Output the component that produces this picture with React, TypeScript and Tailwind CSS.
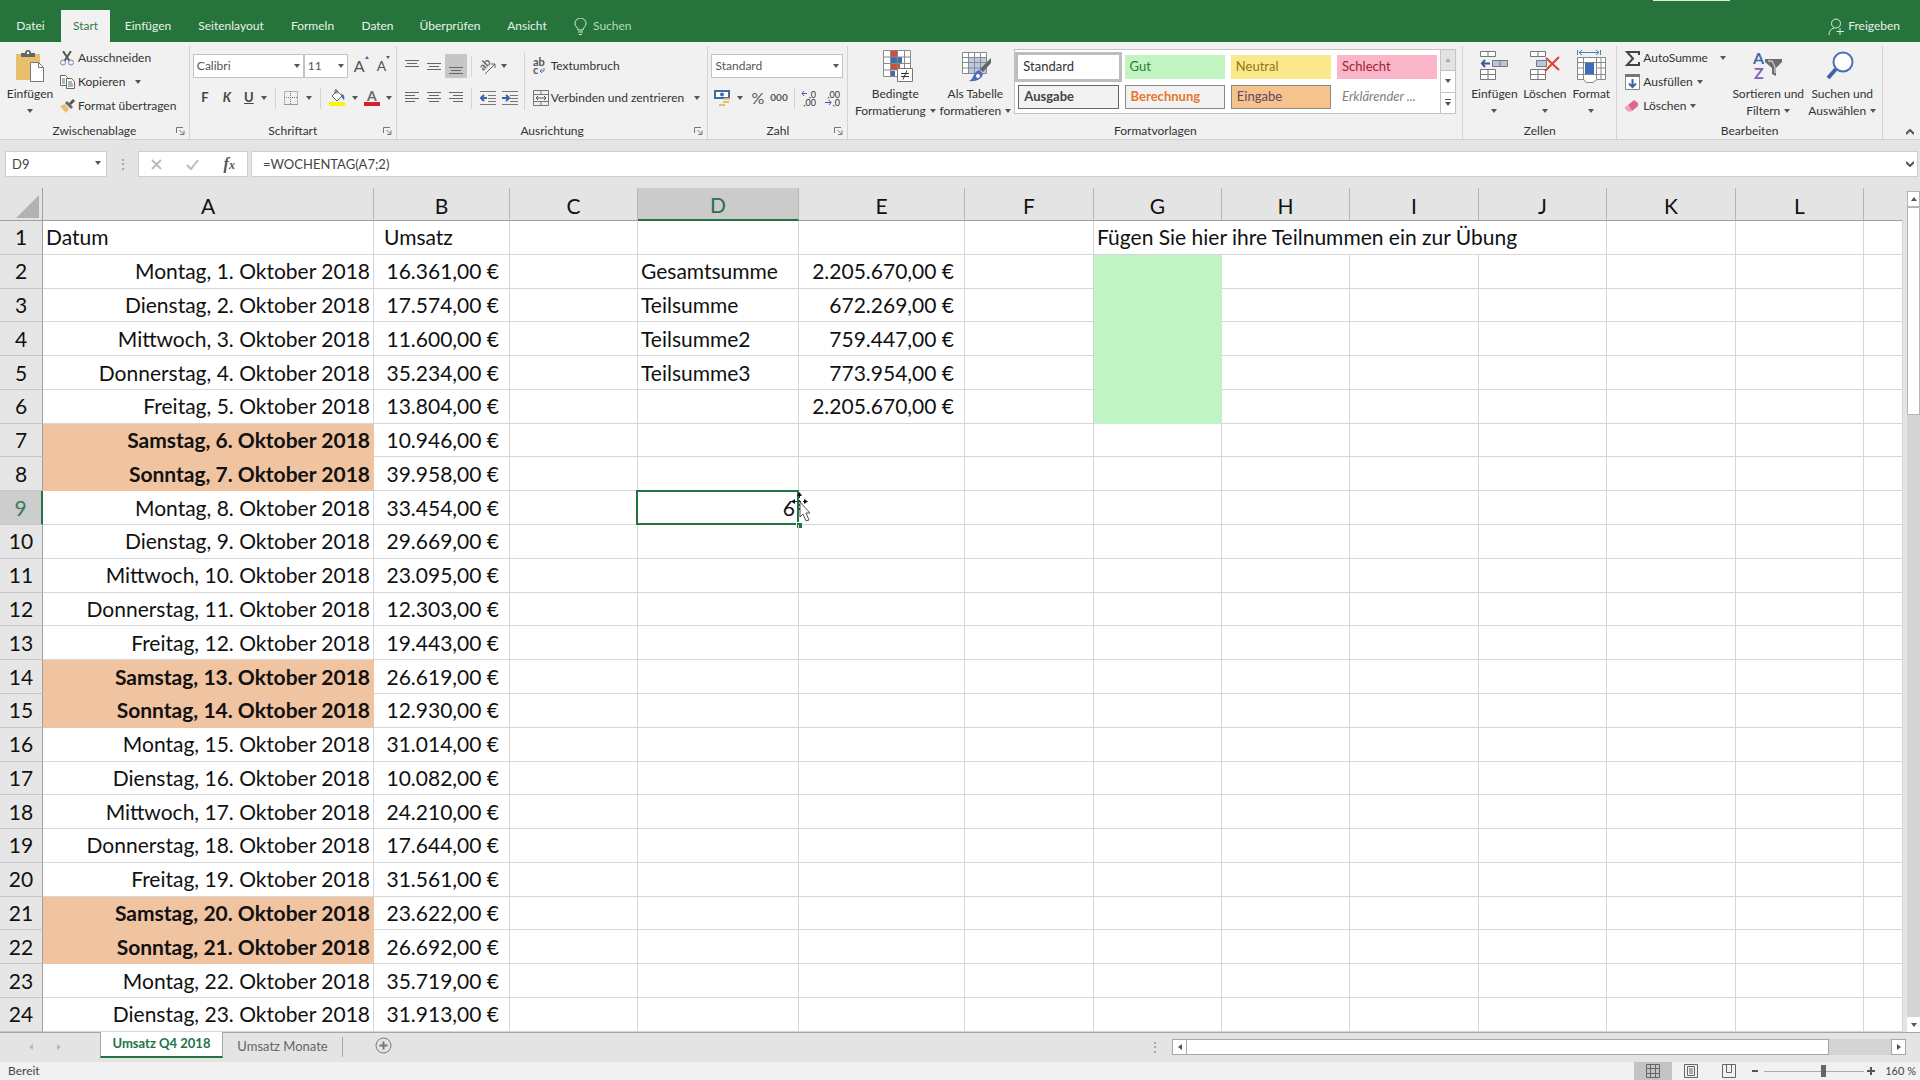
import React from 'react';
import clsx from 'clsx';

type TDay = [date: string, revenue: string];

const DAYS: TDay[] = [
  ['Montag, 1. Oktober 2018', '16.361,00 €'],
  ['Dienstag, 2. Oktober 2018', '17.574,00 €'],
  ['Mittwoch, 3. Oktober 2018', '11.600,00 €'],
  ['Donnerstag, 4. Oktober 2018', '35.234,00 €'],
  ['Freitag, 5. Oktober 2018', '13.804,00 €'],
  ['Samstag, 6. Oktober 2018', '10.946,00 €'],
  ['Sonntag, 7. Oktober 2018', '39.958,00 €'],
  ['Montag, 8. Oktober 2018', '33.454,00 €'],
  ['Dienstag, 9. Oktober 2018', '29.669,00 €'],
  ['Mittwoch, 10. Oktober 2018', '23.095,00 €'],
  ['Donnerstag, 11. Oktober 2018', '12.303,00 €'],
  ['Freitag, 12. Oktober 2018', '19.443,00 €'],
  ['Samstag, 13. Oktober 2018', '26.619,00 €'],
  ['Sonntag, 14. Oktober 2018', '12.930,00 €'],
  ['Montag, 15. Oktober 2018', '31.014,00 €'],
  ['Dienstag, 16. Oktober 2018', '10.082,00 €'],
  ['Mittwoch, 17. Oktober 2018', '24.210,00 €'],
  ['Donnerstag, 18. Oktober 2018', '17.644,00 €'],
  ['Freitag, 19. Oktober 2018', '31.561,00 €'],
  ['Samstag, 20. Oktober 2018', '23.622,00 €'],
  ['Sonntag, 21. Oktober 2018', '26.692,00 €'],
  ['Montag, 22. Oktober 2018', '35.719,00 €'],
  ['Dienstag, 23. Oktober 2018', '31.913,00 €'],
];

// row number -> [column D, column E]
const SUMS: Record<number, [string, string]> = {
  2: ['Gesamtsumme', '2.205.670,00 €'],
  3: ['Teilsumme', '672.269,00 €'],
  4: ['Teilsumme2', '759.447,00 €'],
  5: ['Teilsumme3', '773.954,00 €'],
  6: ['', '2.205.670,00 €'],
  9: ['6', ''],
};

const COLUMNS = [
  { name: 'A', width: 'w-[331px]' },
  { name: 'B', width: 'w-[136px]' },
  { name: 'C', width: 'w-[128px]' },
  { name: 'D', width: 'w-[161px]' },
  { name: 'E', width: 'w-[166px]' },
  { name: 'F', width: 'w-[129px]' },
  { name: 'G', width: 'w-[128px]' },
  { name: 'H', width: 'w-[128px]' },
  { name: 'I', width: 'w-[129px]' },
  { name: 'J', width: 'w-[128px]' },
  { name: 'K', width: 'w-[129px]' },
  { name: 'L', width: 'w-[128px]' },
];

const TABS = [
  { label: 'Datei', width: 'w-[61px]' },
  { label: 'Start', width: 'w-[49px]' },
  { label: 'Einfügen', width: 'w-[76px]' },
  { label: 'Seitenlayout', width: 'w-[90px]' },
  { label: 'Formeln', width: 'w-[73px]' },
  { label: 'Daten', width: 'w-[57px]' },
  { label: 'Überprüfen', width: 'w-[88px]' },
  { label: 'Ansicht', width: 'w-[66px]' },
];

function Arrow({ className }: { className?: string }) {
  return (
    <svg
      viewBox="0 0 6 4"
      className={clsx('h-1 w-1.5 shrink-0', className)}
      fill="#555"
    >
      <path d="M0 0h6L3 4z" />
    </svg>
  );
}

function Launcher() {
  return (
    <button className="absolute right-1 bottom-1" aria-label="Weitere Optionen">
      <svg width="9" height="8" viewBox="0 0 9 8" fill="none" stroke="#777">
        <path d="M.5 6V.5H7M3.5 3l4 4M8 3.5v4H4" />
      </svg>
    </button>
  );
}

function Group({
  label,
  className,
  launcher,
  children,
}: {
  label: string;
  className: string;
  launcher?: boolean;
  children: React.ReactNode;
}) {
  return (
    <section
      className={clsx(
        'relative flex h-[93px] flex-col border-r border-[#d4d4d4]',
        className,
      )}
    >
      <div className="flex h-[77px]">{children}</div>
      <h2 className="text-center leading-4">{label}</h2>
      {launcher && <Launcher />}
    </section>
  );
}

function BigButton({
  icon,
  lines,
  className,
}: {
  icon: React.ReactNode;
  lines: string[];
  className: string;
}) {
  return (
    <button
      className={clsx(
        'flex shrink-0 flex-col items-center pt-1 leading-[17px] whitespace-nowrap',
        className,
      )}
    >
      <span className="mb-[3px] flex h-8 items-center">{icon}</span>
      <span>{lines[0]}</span>
      <span className="flex h-[17px] items-center gap-1">
        {lines[1]}
        <Arrow />
      </span>
    </button>
  );
}

function SmallButton({
  icon,
  label,
  arrow,
}: {
  icon: React.ReactNode;
  label: string;
  arrow?: string;
}) {
  return (
    <button className="flex h-6 items-center whitespace-nowrap">
      <span className="flex w-[18px] shrink-0">{icon}</span>
      {label}
      {arrow && <Arrow className={arrow} />}
    </button>
  );
}

function Combo({
  label,
  value,
  className,
}: {
  label: string;
  value: string;
  className: string;
}) {
  return (
    <div className={clsx('relative h-6', className)}>
      <select
        aria-label={label}
        className="h-full w-full appearance-none border border-[#c3c3c3] bg-white px-[3px] text-[#555]"
      >
        <option>{value}</option>
      </select>
      <Arrow className="absolute top-2.5 right-1" />
    </div>
  );
}

function Divider({ className }: { className?: string }) {
  return <span className={clsx('w-px bg-[#d4d4d4]', className ?? 'h-[21px]')} />;
}

function Lines({ d, y = 0 }: { d: number[][]; y?: number }) {
  return (
    <svg width="14" height="13" viewBox="0 0 14 13" stroke="#666">
      {d.map(([x1, x2], i) => (
        <path key={i} d={`M${x1} ${y + i * 3 + 0.5}H${x2}`} />
      ))}
    </svg>
  );
}

function PasteIcon() {
  return (
    <svg width="30" height="32" viewBox="0 0 30 32">
      <path d="M1 4h24v26H1z" fill="#e8bf6d" />
      <path d="M6 7V3h4a3 3 0 0 1 6 0h4v4z" fill="#666" />
      <circle cx="13" cy="3" r="1.2" fill="#fff" />
      <path d="M15.5 12.5h8l5 5v14h-13z" fill="#fff" stroke="#777" />
      <path d="M23.5 12.5v5h5" fill="none" stroke="#777" />
    </svg>
  );
}

function CutIcon() {
  return (
    <svg width="14" height="15" viewBox="0 0 14 15" fill="none">
      <path d="M3 0l6.5 10M11 0L4.5 10" stroke="#555" strokeWidth="2" />
      <circle cx="3" cy="11.5" r="2.5" stroke="#7186b8" />
      <circle cx="11" cy="11.5" r="2.5" stroke="#7186b8" />
    </svg>
  );
}

function CopyIcon() {
  return (
    <svg width="15" height="14" viewBox="0 0 15 14" fill="#fff" stroke="#666">
      <path d="M.5.5h5l2 2v8h-7z" />
      <path d="M2 4h3M2 6h3M2 8h3" />
      <path d="M6.5 3.5h5l3 3v7h-8z" />
      <path d="M8 7h4M8 9h5M8 11h5" />
    </svg>
  );
}

function BrushIcon() {
  return (
    <svg width="15" height="14" viewBox="0 0 15 14">
      <path d="M0 7l5-2 4 5-3 4z" fill="#e8bf6d" />
      <path d="M5 4l2-2 6 6-2 2z" fill="#666" />
      <path d="M9 4l4-4 2 2-4 4z" fill="#555" />
    </svg>
  );
}

function FillIcon() {
  return (
    <svg width="17" height="18" viewBox="0 0 17 18" fill="none">
      <path d="M0 13h16v4H0z" fill="#fbf50a" />
      <path d="M3 7l5-5 5 5-5 5z" fill="#fff" stroke="#666" />
      <path d="M6 5V1h2v4" stroke="#666" />
      <path d="M12 5c3 0 4 3 3 6-2-1-2-3-3-6z" fill="#3f6fb0" />
    </svg>
  );
}

function BordersIcon() {
  return (
    <svg width="14" height="14" viewBox="0 0 14 14" fill="none" stroke="#777">
      <path d="M.5.5h13v13H.5zM6.5 0v14M0 6.5h14" strokeDasharray="1 1" />
      <path d="M0 13.5h14" stroke="#999" />
    </svg>
  );
}

function IndentIcon({ right }: { right?: boolean }) {
  return (
    <svg width="16" height="14" viewBox="0 0 16 14" fill="none" stroke="#777">
      <path d="M0 .5h16M8 4.5h8M8 7.5h8M8 10.5h8M0 13.5h16" />
      {right ? (
        <path d="M0 7h6M4 4l3 3-3 3" stroke="#3a62ad" strokeWidth="2" />
      ) : (
        <path d="M7 7H1M4 4L1 7l3 3" stroke="#3a62ad" strokeWidth="2" />
      )}
    </svg>
  );
}

function OrientationIcon() {
  return (
    <svg width="17" height="17" viewBox="0 0 17 17" fill="none">
      <text
        x="1"
        y="10"
        fontSize="11"
        fontWeight="700"
        fill="#666"
        transform="rotate(-45 6 9)"
      >
        ab
      </text>
      <path d="M5 16L15 6M11 6h4v4" stroke="#666" />
    </svg>
  );
}

function WrapIcon() {
  return (
    <svg width="14" height="18" viewBox="0 0 14 18" fill="none">
      <text x="0" y="9" fontSize="11" fontWeight="700" fill="#555">
        ab
      </text>
      <text x="0" y="17" fontSize="11" fontWeight="700" fill="#555">
        c
      </text>
      <path d="M11 11v3H7M9 12l-2 2 2 2" stroke="#5a6fae" />
    </svg>
  );
}

function MergeIcon() {
  return (
    <svg width="16" height="16" viewBox="0 0 16 16" fill="none" stroke="#777">
      <path d="M.5.5h15v15H.5zM.5 4.5h15M.5 11.5h15M8 .5v4M8 11.5v4" />
      <path d="M3 8h10M5 6L3 8l2 2M11 6l2 2-2 2" stroke="#555" />
    </svg>
  );
}

function CurrencyIcon() {
  return (
    <svg width="17" height="17" viewBox="0 0 17 17" fill="none">
      <path d="M1 1h14v7H1z" fill="#fff" stroke="#3a6ea5" strokeWidth="2" />
      <circle cx="8" cy="4.5" r="2" fill="#3a6ea5" />
      <path d="M10 8h6v2h-6zM9 11h6v2H9zM5 14h6v2H5z" fill="#e8bf6d" />
    </svg>
  );
}

function DecimalIcon({ less }: { less?: boolean }) {
  return (
    <svg width="16" height="17" viewBox="0 0 16 17" fill="none">
      <text x="15" y="8" fontSize="9" textAnchor="end" fill="#333">
        {less ? ',00' : ',0'}
      </text>
      <text x="15" y="16" fontSize="9" textAnchor="end" fill="#333">
        {less ? ',0' : ',00'}
      </text>
      {less ? (
        <path d="M0 12.5h6M4 10l2 2.5L4 15" stroke="#4a5fa5" />
      ) : (
        <path d="M6 3.5H1M3 1L1 3.500 3 6" stroke="#4a5fa5" />
      )}
    </svg>
  );
}

function ConditionalIcon() {
  return (
    <svg className="ml-1.5" width="30" height="32" viewBox="0 0 30 32" fill="none">
      <path d="M.5.5h27v26H.5z" fill="#fff" />
      <path d="M8 1h6v6H8zM8 14h9v6H8z" fill="#d04f3a" />
      <path d="M8 7h11v6H8zM8 21h4v6H8z" fill="#3b6fb5" />
      <path
        d="M.5.5h27v26H.5zM7.5.5v26M14.5.5v26M21.5.5v26M.5 7h27M.5 13.5h27M.5 20h27"
        stroke="#8a8a8a"
      />
      <path d="M14.5 18.5h15v13h-15z" fill="#fff" stroke="#777" />
      <path d="M18 23.5h8M18 26.5h8M24 20.5l-4 9" stroke="#333" />
    </svg>
  );
}

function FormatTableIcon() {
  return (
    <svg className="ml-1" width="30" height="32" viewBox="0 0 30 32" fill="none">
      <path d="M.5 2.5h24v21H.5z" fill="#fff" />
      <path d="M7 8h18v16H7z" fill="#bcc9e6" />
      <path
        d="M.5 2.5h24v21H.5zM6.5 2.5v21M12.5 2.5v21M18.5 2.5v21M.5 7.5h24M.5 12.5h24M.5 18h24"
        stroke="#8a8a8a"
      />
      <path d="M29 8v5l-8 9-3-3z" fill="#666" />
      <path d="M17 20l4 4c-1 5-7 8-14 7 5-2 4-9 10-11z" fill="#4a6fb8" />
      <circle cx="16" cy="26" r="2" fill="#fff" />
    </svg>
  );
}

function InsertCellsIcon() {
  return (
    <svg width="28" height="30" viewBox="0 0 28 30" fill="none" stroke="#777">
      <path d="M.5.5h15v5H.5zM8 .5v5" fill="#fff" />
      <path d="M12.5 9.5h15v6h-15z" fill="#b8c4e0" />
      <path d="M20 9.5v6" />
      <path d="M10 12.5H2M5 9l-3 3.5L5 16" stroke="#41598f" strokeWidth="2" />
      <path d="M.5 18.5h15v10H.5zM8 18.5v10M.5 23.5h15" fill="#fff" />
    </svg>
  );
}

function DeleteCellsIcon() {
  return (
    <svg width="30" height="30" viewBox="0 0 30 30" fill="none" stroke="#777">
      <path d="M.5.5h15v5H.5zM8 .5v5" fill="#fff" />
      <path d="M6.5 9.5h10v6h-10z" fill="#b8c4e0" />
      <path d="M.5 18.5h15v10H.5zM8 18.5v10M.5 23.5h15" fill="#fff" />
      <path d="M16 7l13 12M29 6L15 20" stroke="#d9432c" strokeWidth="2" />
    </svg>
  );
}

function FormatCellsIcon() {
  return (
    <svg width="29" height="33" viewBox="0 0 29 33" fill="none" stroke="#888">
      <path
        d="M2 2.5h20M5 0L2 2.5 5 5M19 0l3 2.5L19 5M.5 0v5M23.5 0v5"
        stroke="#3f86b8"
      />
      <path
        d="M.5 7.5h28v22H20l-4 3H9l-2-3H.5zM6.5 7.5v22M19.5 7.5v22M24 7.5v22M.5 12.5h28M.5 24.5h28M.5 18h28"
        fill="#fff"
      />
      <path d="M7 13h12v11H7z" fill="#fff" stroke="none" />
      <path d="M8 13h9v11H8z" fill="#3f6cb8" stroke="none" />
    </svg>
  );
}

function SigmaIcon() {
  return (
    <svg width="15" height="15" viewBox="0 0 15 15" fill="none">
      <path
        d="M14 4V1H2l6 6.5L2 14h12v-3"
        stroke="#444"
        strokeWidth="2"
      />
    </svg>
  );
}

function FillDownIcon() {
  return (
    <svg width="15" height="16" viewBox="0 0 15 16" fill="none">
      <path d="M.5.5h14v15H.5z" fill="#fff" stroke="#888" />
      <path d="M0 0h15v3H0z" fill="#777" />
      <path
        d="M7.5 5v8M4 9.5L7.5 13 11 9.5"
        stroke="#3f62a8"
        strokeWidth="2"
      />
    </svg>
  );
}

function EraserIcon() {
  return (
    <svg width="14" height="14" viewBox="0 0 14 14">
      <path d="M3 6l6-5 4 3v3l-6 5z" fill="#e2678f" />
      <path d="M3 6l4 6-3 1-4-3V8z" fill="#f0a3bd" />
    </svg>
  );
}

function SortIcon() {
  return (
    <svg width="30" height="30" viewBox="0 0 30 30">
      <text x="0" y="13" fontSize="16" fontWeight="700" fill="#4169ae">
        A
      </text>
      <text x="1" y="28" fontSize="16" fontWeight="700" fill="#8f5bc0">
        Z
      </text>
      <path d="M12 8h17v3l-6 6v8l-4-2v-6l-7-6z" fill="#6d6d6d" />
      <path d="M15 10h4l3 6v6" fill="none" stroke="#eee" />
    </svg>
  );
}

function FindIcon() {
  return (
    <svg className="mr-1" width="28" height="30" viewBox="0 0 28 30" fill="none">
      <path d="M10 18L2 27" stroke="#3f62a8" strokeWidth="4" />
      <circle cx="17" cy="11" r="9.5" fill="#fff" stroke="#4a72b4" strokeWidth="2" />
    </svg>
  );
}

const STYLES = [
  { label: 'Standard', style: 'bg-white text-[#333] outline-3 outline-[#bdbdbd]' },
  { label: 'Gut', style: 'bg-[#c0f4c0] text-[#2f7a35]' },
  { label: 'Neutral', style: 'bg-[#f9e98a] text-[#967518]' },
  { label: 'Schlecht', style: 'bg-[#fbb5c8] text-[#9c1f36]' },
  { label: 'Ausgabe', style: 'border border-[#666] bg-[#f2f2f2] font-bold text-[#444]' },
  { label: 'Berechnung', style: 'border border-[#8a8a8a] bg-[#f2f2f2] font-bold text-[#e8772a]' },
  { label: 'Eingabe', style: 'border border-[#8a8a8a] bg-[#f6c38d] text-[#5b4767]' },
  { label: 'Erklärender ...', style: 'bg-white text-[#808080] italic' },
];

function Ribbon() {
  return (
    <div className="flex h-[98px] shrink-0 border-b border-[#cfcfcf] bg-[#f1f1f1] pt-1 text-[#333]">
      <Group label="Zwischenablage" launcher className="w-[190px]">
        <BigButton icon={<PasteIcon />} lines={['Einfügen']} className="w-[60px]" />
        <div className="flex flex-col">
          <SmallButton icon={<CutIcon />} label="Ausschneiden" />
          <SmallButton icon={<CopyIcon />} label="Kopieren" arrow="ml-2.5" />
          <SmallButton icon={<BrushIcon />} label="Format übertragen" />
        </div>
      </Group>

      <Group label="Schriftart" launcher className="w-[207px]">
        <div className="flex flex-col gap-2 pt-2 pl-[3px]">
          <div className="flex items-center">
            <Combo label="Schriftart" value="Calibri" className="w-[111px]" />
            <Combo label="Schriftgrad" value="11" className="w-11" />
            <button className="ml-1.5 flex text-base leading-5 text-[#555]">
              A
              <span className="h-0 border-x-2 border-b-3 border-x-transparent border-b-[#4a5fa5]" />
            </button>
            <button className="ml-2 flex text-sm leading-5 text-[#555]">
              A
              <span className="h-0 border-x-2 border-t-3 border-x-transparent border-t-[#4a5fa5]" />
            </button>
          </div>
          <div className="flex h-6 items-center">
            <button className="w-6 text-[13px] font-bold text-[#444]">F</button>
            <button className="w-5 text-[13px] font-bold text-[#444] italic">K</button>
            <button className="w-6 text-[13px] font-bold text-[#444] underline">U</button>
            <Arrow className="mr-2" />
            <Divider />
            <button className="mx-2" aria-label="Rahmen">
              <BordersIcon />
            </button>
            <Arrow className="mr-2" />
            <Divider />
            <button className="mr-1.5 ml-2" aria-label="Füllfarbe">
              <FillIcon />
            </button>
            <Arrow className="mr-1.5" />
            <button className="flex h-[18px] w-4 flex-col items-center text-sm leading-[13px] font-bold text-[#666]">
              A<span className="h-1 w-4 bg-[#d3222a]" />
            </button>
            <Arrow className="ml-1.5" />
          </div>
        </div>
      </Group>

      <Group label="Ausrichtung" launcher className="w-[312px]">
        <div className="flex flex-col gap-2 pt-2 pl-1">
          <div className="flex h-6 items-center">
            <button className="flex h-6 w-[22px] items-center justify-center" aria-label="Oben ausrichten">
              <Lines d={[[0, 14], [2, 12], [0, 14]]} />
            </button>
            <button className="flex h-6 w-[22px] items-center justify-center" aria-label="Zentriert ausrichten">
              <Lines d={[[0, 14], [2, 12], [0, 14]]} y={3} />
            </button>
            <button className="flex h-6 w-[22px] items-end justify-center bg-[#c6c6c6] pb-1" aria-label="Unten ausrichten">
              <Lines d={[[0, 14], [2, 12], [0, 14]]} y={6} />
            </button>
            <Divider className="mx-1 h-[21px]" />
            <button className="mr-1 ml-1 flex items-center gap-1" aria-label="Ausrichtung">
              <OrientationIcon />
              <Arrow />
            </button>
          </div>
          <div className="flex h-6 items-center">
            <button className="flex w-[22px] justify-center" aria-label="Linksbündig">
              <Lines d={[[0, 14], [0, 10], [0, 14], [0, 10]]} />
            </button>
            <button className="flex w-[22px] justify-center" aria-label="Zentriert">
              <Lines d={[[0, 14], [2, 12], [0, 14], [2, 12]]} />
            </button>
            <button className="flex w-[22px] justify-center" aria-label="Rechtsbündig">
              <Lines d={[[0, 14], [4, 14], [0, 14], [4, 14]]} />
            </button>
            <Divider className="mx-1 h-[21px]" />
            <button className="ml-1" aria-label="Einzug verkleinern">
              <IndentIcon />
            </button>
            <button className="ml-1.5" aria-label="Einzug vergrößern">
              <IndentIcon right />
            </button>
          </div>
        </div>
        <Divider className="mt-1.5 mr-2 ml-1.5 h-[58px]" />
        <div className="flex flex-col gap-2 pt-2">
          <button className="flex h-6 items-center">
            <span className="w-[18px]">
              <WrapIcon />
            </span>
            Textumbruch
          </button>
          <button className="flex h-6 items-center whitespace-nowrap">
            <span className="w-[18px]">
              <MergeIcon />
            </span>
            Verbinden und zentrieren
            <Arrow className="ml-2.5" />
          </button>
        </div>
      </Group>

      <Group label="Zahl" launcher className="w-[140px]">
        <div className="flex flex-col gap-2 pt-2 pl-[3px]">
          <Combo label="Zahlenformat" value="Standard" className="w-[132px]" />
          <div className="flex h-6 items-center pl-[3px]">
            <button aria-label="Buchhaltungszahlenformat">
              <CurrencyIcon />
            </button>
            <Arrow className="ml-1.5" />
            <button className="ml-2 text-base text-[#555]">%</button>
            <button className="mr-1.5 ml-1.5 text-[10px] font-bold text-[#555]">000</button>
            <Divider />
            <button className="ml-1.5" aria-label="Dezimalstelle hinzufügen">
              <DecimalIcon />
            </button>
            <button className="ml-2" aria-label="Dezimalstelle entfernen">
              <DecimalIcon less />
            </button>
          </div>
        </div>
      </Group>

      <Group label="Formatvorlagen" className="min-w-[615px] flex-1">
        <BigButton icon={<ConditionalIcon />} lines={['Bedingte', 'Formatierung']} className="ml-1.5 w-[82px]" />
        <BigButton icon={<FormatTableIcon />} lines={['Als Tabelle', 'formatieren']} className="w-[78px]" />
        <div className="mt-[3px] mr-1.5 flex h-[65px] flex-1 border border-[#c3c3c3] bg-white">
          <div className="grid flex-1 grid-cols-4 gap-1.5 px-[3px] py-[5px]">
            {STYLES.map(({ label, style }) => (
              <button
                key={label}
                className={clsx('h-6 px-[5px] text-left text-[13px] whitespace-nowrap', style)}
              >
                {label}
              </button>
            ))}
          </div>
          <div className="flex w-[15px] flex-col border-l border-[#c3c3c3]">
            <button className="flex flex-1 items-center justify-center bg-[#e3e3e3]" aria-label="Nach oben">
              <Arrow className="rotate-180 opacity-40" />
            </button>
            <button className="flex flex-1 items-center justify-center border-y border-[#c3c3c3]" aria-label="Nach unten">
              <Arrow />
            </button>
            <button className="flex flex-1 flex-col items-center justify-center gap-0.5" aria-label="Weitere">
              <span className="h-px w-1.5 bg-[#555]" />
              <Arrow />
            </button>
          </div>
        </div>
      </Group>

      <Group label="Zellen" className="w-[154px]">
        <BigButton icon={<InsertCellsIcon />} lines={['Einfügen']} className="ml-1 w-[54px]" />
        <BigButton icon={<DeleteCellsIcon />} lines={['Löschen']} className="w-[47px]" />
        <BigButton icon={<FormatCellsIcon />} lines={['Format']} className="w-[46px]" />
      </Group>

      <Group label="Bearbeiten" className="w-[266px]">
        <div className="flex w-[112px] shrink-0 flex-col pl-2">
          <SmallButton icon={<SigmaIcon />} label="AutoSumme" arrow="ml-3" />
          <SmallButton icon={<FillDownIcon />} label="Ausfüllen" arrow="ml-1" />
          <SmallButton icon={<EraserIcon />} label="Löschen" arrow="ml-1" />
        </div>
        <BigButton icon={<SortIcon />} lines={['Sortieren und', 'Filtern']} className="w-[78px]" />
        <BigButton icon={<FindIcon />} lines={['Suchen und', 'Auswählen']} className="w-[70px]" />
      </Group>

      <button className="mb-1 flex w-[37px] items-end justify-end pr-1.5" aria-label="Menüband reduzieren">
        <svg width="8" height="6" viewBox="0 0 8 6" fill="none" stroke="#555" strokeWidth="2">
          <path d="M0 5l4-4 4 4" />
        </svg>
      </button>
    </div>
  );
}

function FormulaBar() {
  return (
    <div className="flex h-12 shrink-0 items-center bg-[#e4e4e4] pr-0.5 pl-[5px] text-sm">
      <div className="relative h-[26px] w-[102px]">
        <input
          aria-label="Namenfeld"
          defaultValue="D9"
          className="h-full w-full border border-[#cfcfcf] bg-white px-1.5 text-[13px] text-[#444]"
        />
        <Arrow className="absolute top-2.5 right-1.5" />
      </div>
      <span className="w-[31px] text-center text-[#999]">⋮</span>
      <div className="flex h-[26px] w-[110px] items-center justify-around border border-[#cfcfcf] bg-white">
        <button aria-label="Abbrechen">
          <svg width="11" height="11" viewBox="0 0 11 11" stroke="#bbb" strokeWidth="2">
            <path d="M1 1l9 9M10 1l-9 9" />
          </svg>
        </button>
        <button aria-label="Eingeben">
          <svg width="13" height="11" viewBox="0 0 13 11" fill="none" stroke="#bbb" strokeWidth="2">
            <path d="M1 6l4 4 7-9" />
          </svg>
        </button>
        <button className="font-['Liberation_Serif',serif] text-base leading-4 font-bold text-[#555] italic">
          f<span className="text-xs">x</span>
        </button>
      </div>
      <div className="relative ml-[3px] h-[26px] flex-1">
        <input
          aria-label="Bearbeitungsleiste"
          defaultValue="=WOCHENTAG(A7;2)"
          className="h-full w-full border border-[#cfcfcf] bg-white px-[11px] text-[13px] text-[#444]"
        />
        <svg
          className="absolute top-2.5 right-1"
          width="8"
          height="6"
          viewBox="0 0 8 6"
          fill="none"
          stroke="#555"
          strokeWidth="2"
        >
          <path d="M0 1l4 4 4-4" />
        </svg>
      </div>
    </div>
  );
}

function MoveCursor() {
  return (
    <svg
      className="absolute top-0 left-full z-10 -ml-2"
      width="20"
      height="31"
      viewBox="0 0 20 31"
    >
      <path d="M5 10.5h10M9.5 5v14" stroke="#222" strokeDasharray="2 2" />
      <path d="M1 10.5l4-2.500v5zM18 10.5L14 8v5zM9.5 1L7 5h5z" fill="#111" />
      <path
        d="M10 11v15l3-3 3 7 3-1-3-7h4z"
        fill="#fff"
        stroke="#555"
      />
    </svg>
  );
}

const CELL = 'border-r border-b border-[#d6d6d6] p-0 whitespace-nowrap';

function Row({ row }: { row: number }) {
  const [date, revenue] = row === 1 ? ['Datum', 'Umsatz'] : DAYS[row - 2];
  const isWeekend = date.startsWith('Samstag') || date.startsWith('Sonntag');
  const [label, sum] = SUMS[row] ?? ['', ''];
  const isActive = row === 9;

  return (
    <tr>
      <th
        scope="row"
        className={clsx(
          'border-b p-0 font-normal',
          isActive
            ? 'border-r-2 border-r-[#217346] border-b-[#c6c6c6] bg-[#cdcdcd] text-[#3d7a57]'
            : 'border-r border-r-[#9f9f9f] border-b-[#c6c6c6] bg-[#e6e6e6]',
        )}
      >
        {row}
      </th>
      <td
        className={clsx(
          'border-r border-b p-0 px-[3px] whitespace-nowrap',
          row > 1 && 'text-right',
          isWeekend ? 'border-[#f0c3a1] bg-[#f0c3a1] font-bold' : 'border-[#d6d6d6]',
        )}
      >
        {date}
      </td>
      <td className={clsx(CELL, row === 1 ? 'pl-2.5' : 'pr-2.5 text-right')}>{revenue}</td>
      <td className={CELL} />
      <td className={clsx(CELL, 'relative px-[3px]', isActive && 'text-right')}>
        {label}
        {isActive && (
          <>
            <span className="absolute -inset-px -left-0.5 border-2 border-[#217346]" />
            <span className="absolute -right-1 -bottom-1 size-1.5 border-t border-l border-white bg-[#217346]" />
            <MoveCursor />
          </>
        )}
      </td>
      <td className={clsx(CELL, 'pr-2.5 text-right')}>{sum}</td>
      <td className={CELL} />
      {row === 1 ? (
        <td colSpan={4} className={clsx(CELL, 'px-[3px]')}>
          Fügen Sie hier ihre Teilnummen ein zur Übung
        </td>
      ) : (
        <>
          <td
            className={clsx(
              'border-r border-b',
              row <= 6 ? 'border-[#c1f4c4] bg-[#c1f4c4]' : 'border-[#d6d6d6]',
            )}
          />
          <td className={CELL} />
          <td className={CELL} />
          <td className={CELL} />
        </>
      )}
      <td className={CELL} />
      <td className={CELL} />
      <td className={CELL} />
    </tr>
  );
}

function Sheet() {
  return (
    <div className="flex min-h-0 flex-1 bg-[#e4e4e4]">
      <table className="h-full flex-1 table-fixed border-separate border-spacing-0 bg-white text-[21px] leading-6 text-[#111]">
        <colgroup>
          <col className="w-[43px]" />
          {COLUMNS.map(({ name, width }) => (
            <col key={name} className={width} />
          ))}
          <col />
        </colgroup>
        <thead className="bg-[#e4e4e4]">
          <tr className="h-[33px]">
            <th className="border-r border-b border-[#9f9f9f] p-0" aria-label="Alles auswählen">
              <svg className="mt-1 ml-auto mr-[3px]" width="23" height="23" viewBox="0 0 23 23">
                <path d="M23 0v23H0z" fill="#b3b3b3" />
              </svg>
            </th>
            {COLUMNS.map(({ name }) => (
              <th
                key={name}
                scope="col"
                className={clsx(
                  'border-r border-r-[#b5b5b5] p-0 pt-[3px] font-normal',
                  name === 'D'
                    ? 'border-b-2 border-b-[#217346] bg-[#cbcbcb] text-[#2f6b4c]'
                    : 'border-b border-b-[#9f9f9f]',
                )}
              >
                {name}
              </th>
            ))}
            <th className="border-r border-b border-r-transparent border-b-[#9f9f9f] p-0" />
          </tr>
        </thead>
        <tbody>
          {Array.from({ length: 24 }, (_, i) => (
            <Row key={i} row={i + 1} />
          ))}
        </tbody>
      </table>
      <div className="ml-1 flex w-[13px] flex-col bg-[#d4d4d4]">
        <div className="h-[3px] bg-[#e4e4e4]" />
        <button className="flex h-4 items-center justify-center border border-[#b5b5b5] bg-white" aria-label="Nach oben">
          <Arrow className="rotate-180" />
        </button>
        <div className="h-[208px] border border-[#b5b5b5] bg-white" />
        <button className="mt-auto flex h-[15px] items-center justify-center bg-white" aria-label="Nach unten">
          <Arrow />
        </button>
      </div>
    </div>
  );
}

function SheetTabs() {
  return (
    <div className="flex h-[30px] shrink-0 border-t border-[#a6a6a6] bg-[#e4e4e4] text-[13px]">
      <div className="flex h-7 w-[100px] items-center gap-[22px] pl-7">
        <button aria-label="Vorheriges Blatt">
          <Arrow className="rotate-90 opacity-30" />
        </button>
        <button aria-label="Nächstes Blatt">
          <Arrow className="-rotate-90 opacity-30" />
        </button>
      </div>
      <button className="-mt-px h-[26px] w-[123px] border-x border-b-2 border-x-[#a6a6a6] border-b-[#217346] bg-white font-bold text-[#217346]">
        Umsatz Q4 2018
      </button>
      <button className="my-1 h-5 w-[120px] border-r border-[#a6a6a6] text-[#666]">
        Umsatz Monate
      </button>
      <button className="ml-8 self-start pt-1" aria-label="Neues Blatt">
        <svg width="17" height="17" viewBox="0 0 17 17" fill="none" stroke="#777">
          <circle cx="8.5" cy="8.5" r="7.5" />
          <path d="M8.5 4.5v8M4.5 8.5h8" strokeWidth="2" />
        </svg>
      </button>
      <span className="mr-2.5 ml-auto pt-1 text-sm text-[#999]">⋮</span>
      <div className="mt-1.5 mr-3.5 flex h-4 w-[734px] bg-[#d4d4d4]">
        <button className="flex w-[15px] items-center justify-center border border-[#a6a6a6] bg-white" aria-label="Nach links">
          <Arrow className="rotate-90" />
        </button>
        <div className="w-[642px] border border-l-0 border-[#a6a6a6] bg-white" />
        <button className="ml-auto flex w-[15px] items-center justify-center border border-[#a6a6a6] bg-white" aria-label="Nach rechts">
          <Arrow className="-rotate-90" />
        </button>
      </div>
    </div>
  );
}

function StatusBar() {
  return (
    <footer className="flex h-[18px] shrink-0 items-center bg-[#f1f1f1] pr-1 pl-2 text-[#444]">
      <span className="mr-auto">Bereit</span>
      <button className="flex h-full w-[38px] items-center justify-center bg-[#c3c3c3]" aria-label="Normal">
        <svg width="14" height="14" viewBox="0 0 14 14" fill="none" stroke="#666">
          <path d="M.5.5h13v13H.5zM4.5 0v14M9.5 0v14M0 4.5h14M0 9.5h14" />
        </svg>
      </button>
      <button className="w-[38px] pl-3" aria-label="Seitenlayout">
        <svg width="14" height="14" viewBox="0 0 14 14" fill="none" stroke="#666">
          <path d="M.5.5h13v13H.5zM3.5 2.5h7v9h-7zM5 5h4M5 7h4M5 9h4" />
        </svg>
      </button>
      <button className="w-[38px] pl-3" aria-label="Umbruchvorschau">
        <svg width="14" height="14" viewBox="0 0 14 14" fill="none" stroke="#666">
          <path d="M.5.5h13v13H.5zM4.5 0v8.500h5V0" />
        </svg>
      </button>
      <button className="flex h-full w-4 items-center pl-1" aria-label="Verkleinern">
        <span className="h-0.5 w-1.5 bg-[#555]" />
      </button>
      <input
        type="range"
        aria-label="Zoom"
        min={0}
        max={100}
        defaultValue={60}
        className="h-3 w-[100px] appearance-none bg-[linear-gradient(#aaa,#aaa)] bg-[length:100%_1px] bg-center bg-no-repeat [&::-webkit-slider-thumb]:h-3 [&::-webkit-slider-thumb]:w-[5px] [&::-webkit-slider-thumb]:appearance-none [&::-webkit-slider-thumb]:bg-[#666]"
      />
      <button className="ml-[3px]" aria-label="Vergrößern">
        <svg width="8" height="8" viewBox="0 0 8 8" stroke="#555" strokeWidth="2">
          <path d="M4 0v8M0 4h8" />
        </svg>
      </button>
      <span className="ml-2.5 text-[11px]">160 %</span>
    </footer>
  );
}

export default function App() {
  return (
    <div className="flex h-screen min-h-[900px] flex-col overflow-hidden bg-[#e4e4e4] font-['Lato','Noto_Sans',sans-serif] text-xs">
      <header className="relative flex h-[42px] shrink-0 items-end bg-[#27733c] text-[#e6f3e8]">
        <nav className="flex">
          {TABS.map(({ label, width }) => (
            <button
              key={label}
              className={clsx(
                'h-8 text-center',
                width,
                label === 'Start' && 'bg-[#f1f1f1] text-[#2f7a4a]',
              )}
            >
              {label}
            </button>
          ))}
        </nav>
        <button className="ml-3.5 flex h-8 items-center gap-1.5 text-[#b4dcb9]">
          <svg width="13" height="17" viewBox="0 0 13 17" fill="none" stroke="#d9efdc">
            <path d="M4 12c0-3-3-3-3-6.5a5.5 5.5 0 0 1 11 0C12 9 9 9 9 12zM4 14h5M5 16.5h3" />
          </svg>
          Suchen
        </button>
        <button className="mr-5 ml-auto flex h-8 items-center gap-1">
          <svg width="16" height="17" viewBox="0 0 16 17" fill="none" stroke="#d9efdc">
            <circle cx="8" cy="5.5" r="4.5" />
            <path d="M1 17c0-4 2-6 5-7M12 10v7M8.5 13.5H16" />
          </svg>
          Freigeben
        </button>
        <span className="absolute top-0 right-[190px] h-px w-[77px] bg-[#d9efdc]" />
      </header>
      <Ribbon />
      <FormulaBar />
      <Sheet />
      <SheetTabs />
      <StatusBar />
    </div>
  );
}
